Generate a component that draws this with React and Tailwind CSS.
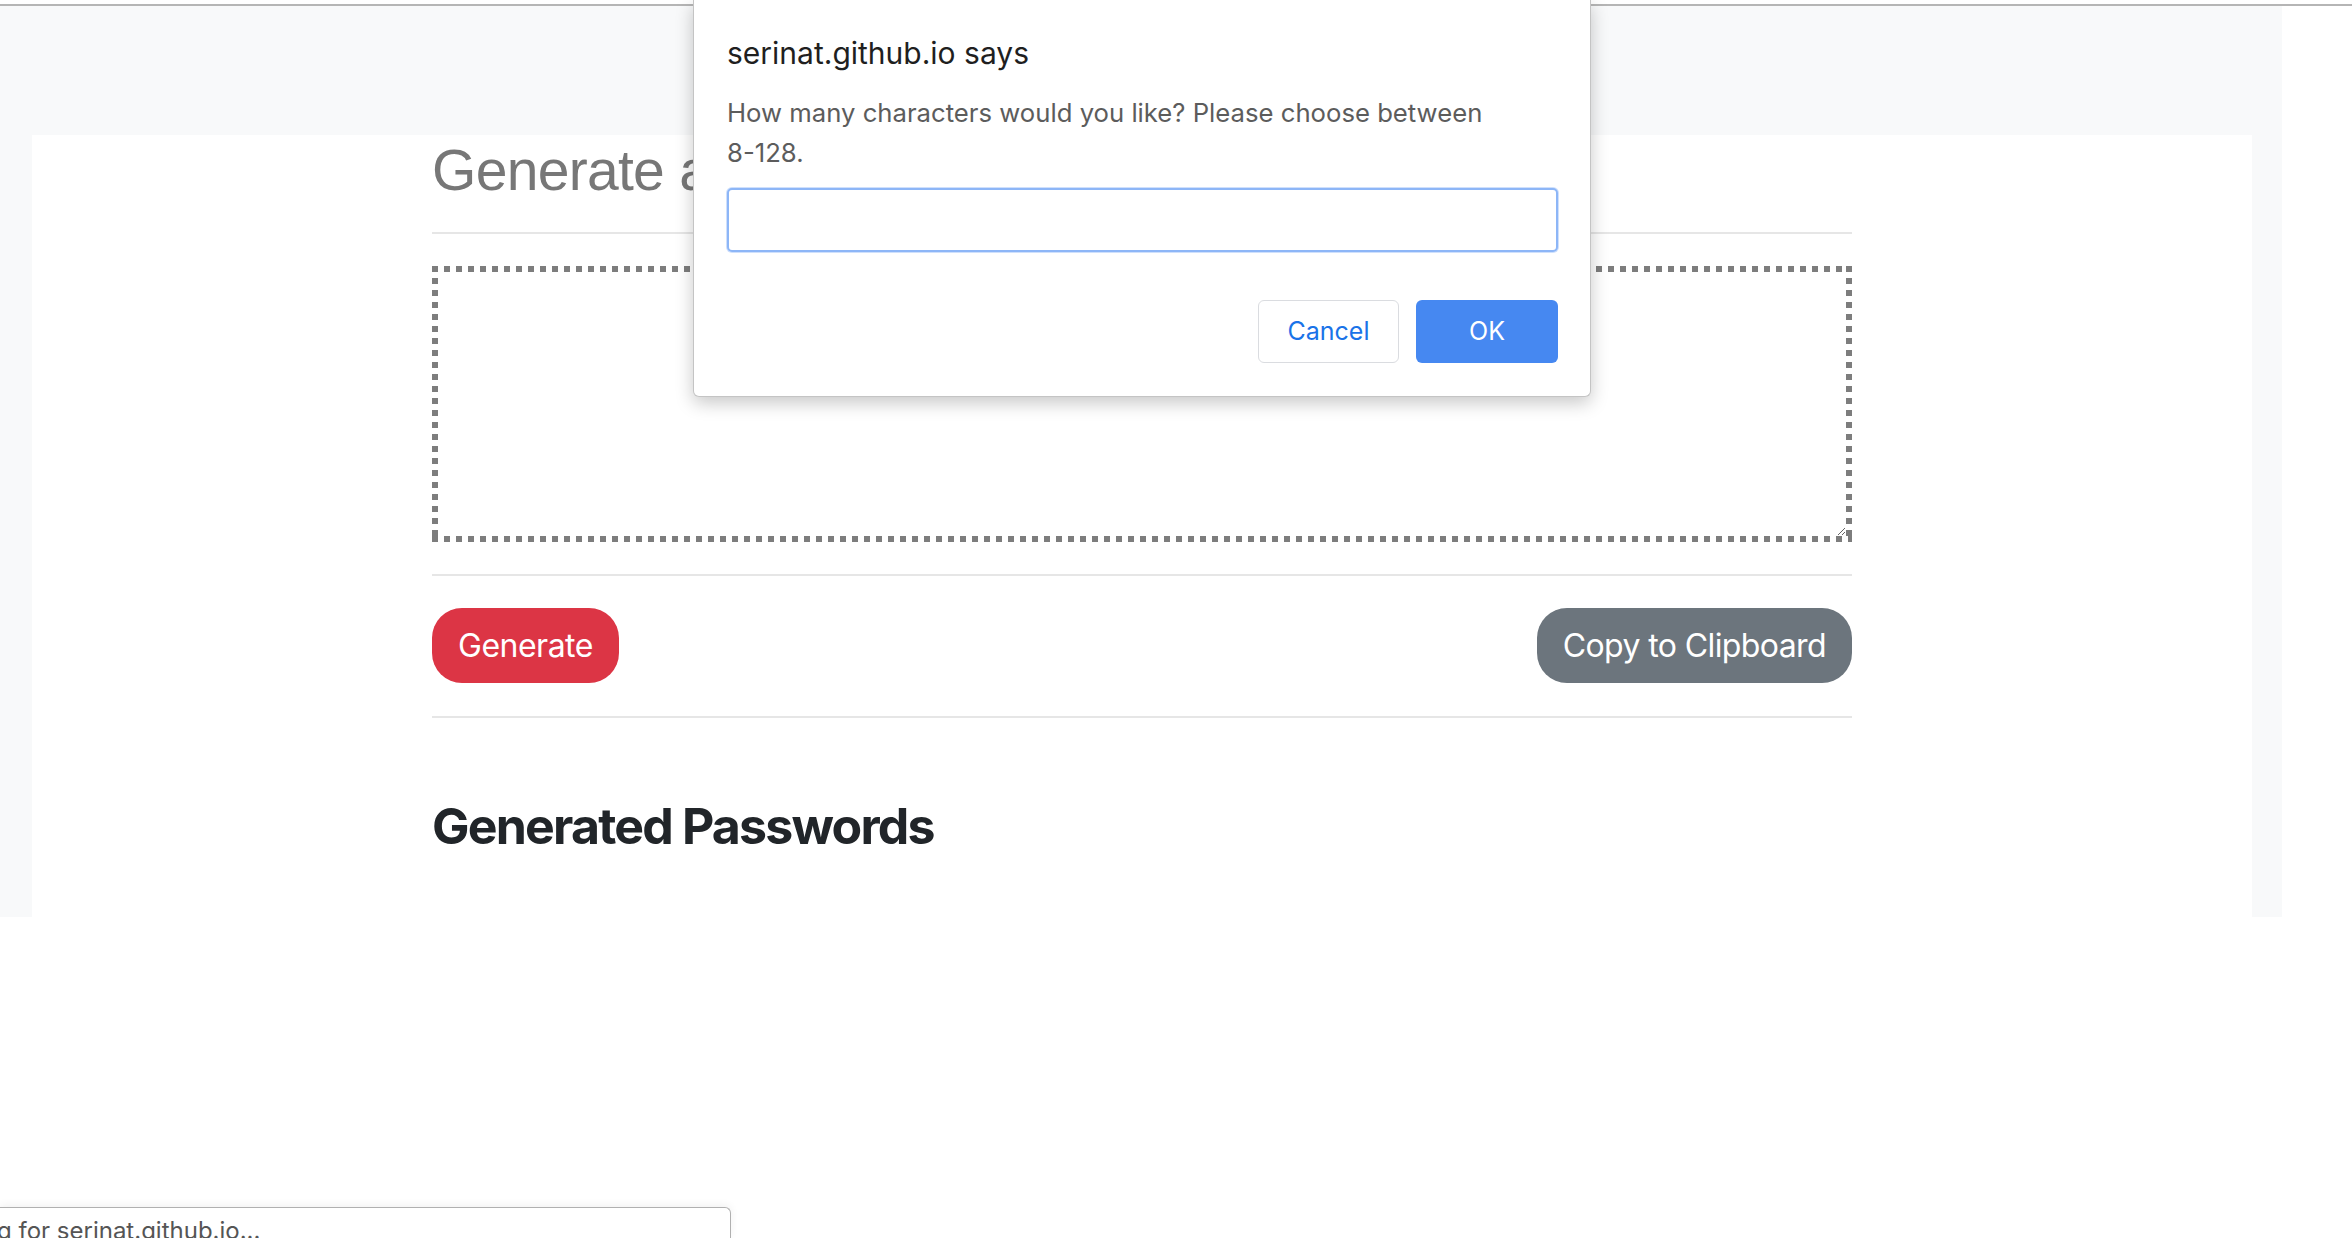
export default function App() {
  return (
    <div className="relative w-[2352px] h-[1238px] overflow-hidden bg-white font-['Inter',sans-serif]">
      <div className="h-[4px] bg-white" />
      <div className="h-[2px] bg-[#b5b5b5]" />
      <div className="w-[2282px] h-[911px] bg-[#f8f9fa] pl-[32px] pr-[30px] pt-[129px]">
        <div className="h-full bg-white pl-[400px] pr-[400px]">
          <h1 className="m-0 text-[57px] leading-[70px] font-normal text-[#777777] tracking-[-0.7px] font-['Liberation_Sans',Arial,sans-serif] whitespace-nowrap">
            Generate a Password
          </h1>
          <div className="mt-[27px] h-[2px] bg-[#e6e6e6]" />
          <div className="mt-[32px] h-[276px] p-[6px] bg-[linear-gradient(to_right,#7d7d7d_6px,transparent_6px),linear-gradient(to_right,#7d7d7d_6px,transparent_6px),linear-gradient(to_bottom,#7d7d7d_6px,transparent_6px),linear-gradient(to_bottom,#7d7d7d_6px,transparent_6px)] bg-[length:12px_6px,12px_6px,6px_12px,6px_12px] bg-[position:0_0,0_100%,0_0,100%_0] [background-repeat:repeat-x,repeat-x,repeat-y,repeat-y]">
            <textarea className="block w-full h-full resize bg-transparent outline-none border-0 p-[12px] text-[32px]" />
          </div>
          <div className="mt-[32px] h-[2px] bg-[#e6e6e6]" />
          <div className="mt-[32px] flex justify-between items-center">
            <button className="h-[75px] px-[26px] rounded-[30px] bg-[#dc3545] text-white text-[32px] leading-[48px] tracking-[-0.5px]">
              Generate
            </button>
            <button className="h-[75px] px-[26px] rounded-[30px] bg-[#6c757d] text-white text-[32px] leading-[48px] tracking-[-0.6px]">
              Copy to Clipboard
            </button>
          </div>
          <div className="mt-[33px] h-[2px] bg-[#e6e6e6]" />
          <h3 className="mt-[78px] text-[50px] leading-[60px] font-bold text-[#212529] tracking-[-1.8px] whitespace-nowrap">
            Generated Passwords
          </h3>
        </div>
      </div>

      <div className="absolute left-[693px] top-0 w-[898px] bg-white border border-t-0 border-[#c4c4c4] rounded-b-[6px] shadow-[0_6px_18px_rgba(0,0,0,0.22)] pl-[33px] pr-[32px] pt-[35px] pb-[33px]">
        <div className="text-[30px] leading-[37px] text-[#1f1f1f] whitespace-nowrap">serinat.github.io says</div>
        <div className="mt-[21px] text-[25.7px] leading-[40px] text-[#5c5c5c] whitespace-nowrap">
          How many characters would you like? Please choose between
          <br />
          8-128.
        </div>
        <div className="mt-[15px] h-[64px] rounded-[5px] border-2 border-[#8db6f7] shadow-[0_0_0_1px_#cfe0fc] bg-white" />
        <div className="mt-[48px] flex justify-end gap-[17px]">
          <button className="w-[141px] h-[63px] rounded-[6px] border border-[#dadce0] bg-white text-[#1a73e8] text-[25px]">
            Cancel
          </button>
          <button className="w-[142px] h-[63px] rounded-[6px] bg-[#4688f1] text-white text-[25px]">
            OK
          </button>
        </div>
      </div>

      <div className="absolute left-0 bottom-0 w-[731px] h-[31px] bg-white border-t border-r border-[#b0b0b0] rounded-tr-[6px] shadow-[0_-2px_8px_rgba(0,0,0,0.06)] overflow-hidden">
        <div className="-ml-[3px] pt-[7px] text-[24px] leading-[31px] text-[#555555] whitespace-nowrap">
          g for serinat.github.io...
        </div>
      </div>
    </div>
  );
}
